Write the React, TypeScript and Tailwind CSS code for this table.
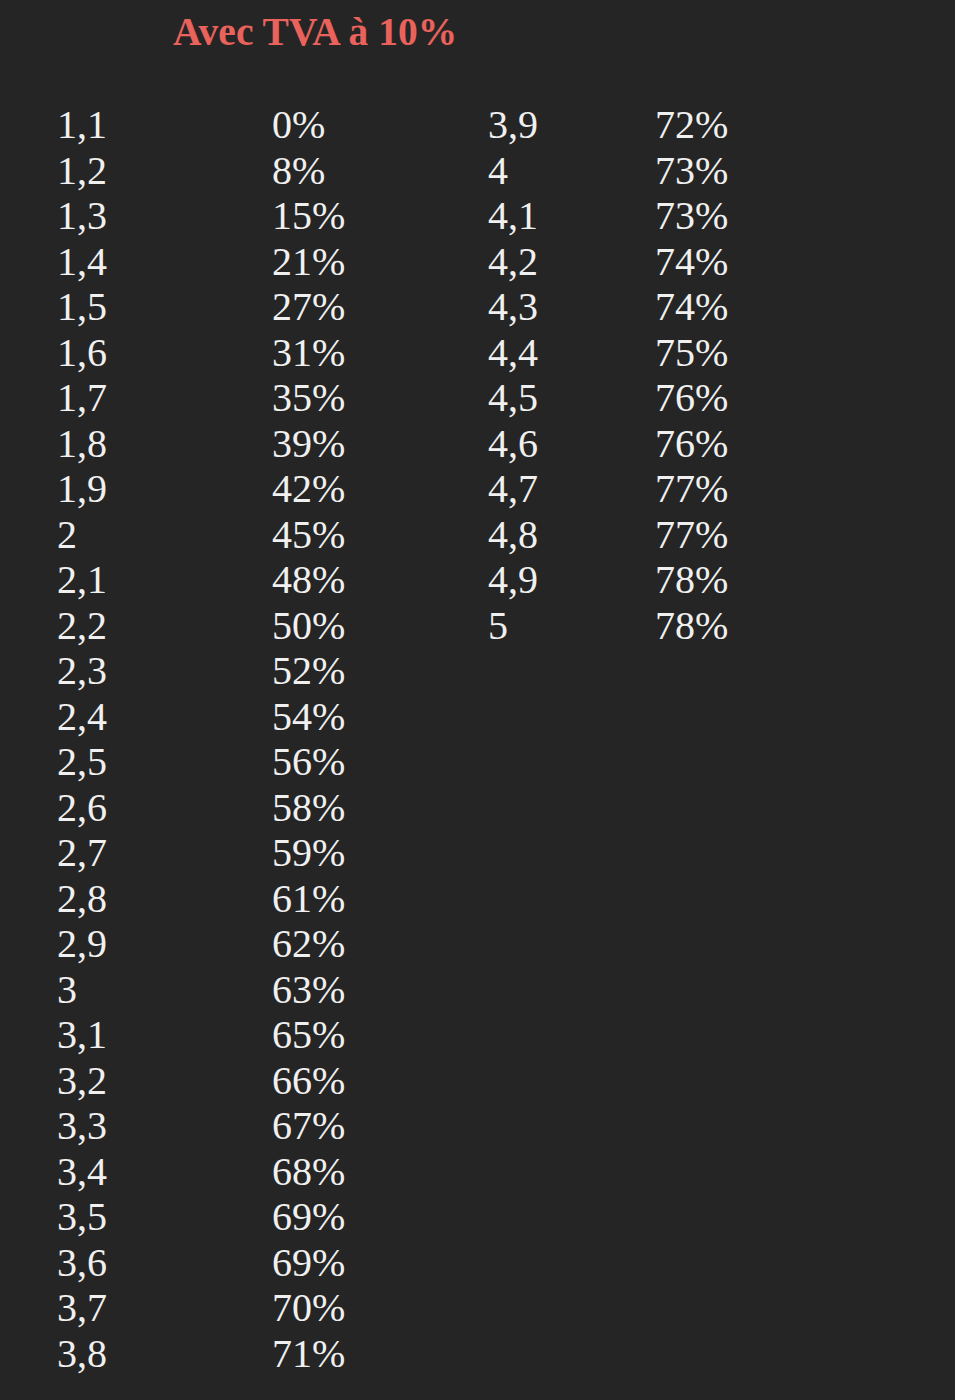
import React from "react";

const left: [string, string][] = [
  ["1,1", "0%"], ["1,2", "8%"], ["1,3", "15%"], ["1,4", "21%"], ["1,5", "27%"],
  ["1,6", "31%"], ["1,7", "35%"], ["1,8", "39%"], ["1,9", "42%"], ["2", "45%"],
  ["2,1", "48%"], ["2,2", "50%"], ["2,3", "52%"], ["2,4", "54%"], ["2,5", "56%"],
  ["2,6", "58%"], ["2,7", "59%"], ["2,8", "61%"], ["2,9", "62%"], ["3", "63%"],
  ["3,1", "65%"], ["3,2", "66%"], ["3,3", "67%"], ["3,4", "68%"], ["3,5", "69%"],
  ["3,6", "69%"], ["3,7", "70%"], ["3,8", "71%"],
];
const right: [string, string][] = [
  ["3,9", "72%"], ["4", "73%"], ["4,1", "73%"], ["4,2", "74%"], ["4,3", "74%"],
  ["4,4", "75%"], ["4,5", "76%"], ["4,6", "76%"], ["4,7", "77%"], ["4,8", "77%"],
  ["4,9", "78%"], ["5", "78%"],
];

export default function App() {
  return (
    <div className="w-[955px] h-[1400px] bg-[#252525] text-[#f0f0f0] overflow-hidden font-['Liberation_Serif','Times_New_Roman',serif]">
      <div className="pt-[9px] pl-[173px]">
        <h1 className="text-[39.5px] leading-[46px] font-bold text-[#e9625b]">Avec TVA à 10%</h1>
      </div>
      <div className="flex pt-[47px] pl-[57px] text-[40px] leading-[45.5px]">
        <div className="flex">
          <div className="w-[215px] flex flex-col">
            {left.map(([a], i) => (
              <div key={i}>{a}</div>
            ))}
          </div>
          <div className="w-[216px] flex flex-col">
            {left.map(([, b], i) => (
              <div key={i}>{b}</div>
            ))}
          </div>
        </div>
        <div className="flex">
          <div className="w-[167px] flex flex-col">
            {right.map(([a], i) => (
              <div key={i}>{a}</div>
            ))}
          </div>
          <div className="w-[120px] flex flex-col">
            {right.map(([, b], i) => (
              <div key={i}>{b}</div>
            ))}
          </div>
        </div>
      </div>
    </div>
  );
}
